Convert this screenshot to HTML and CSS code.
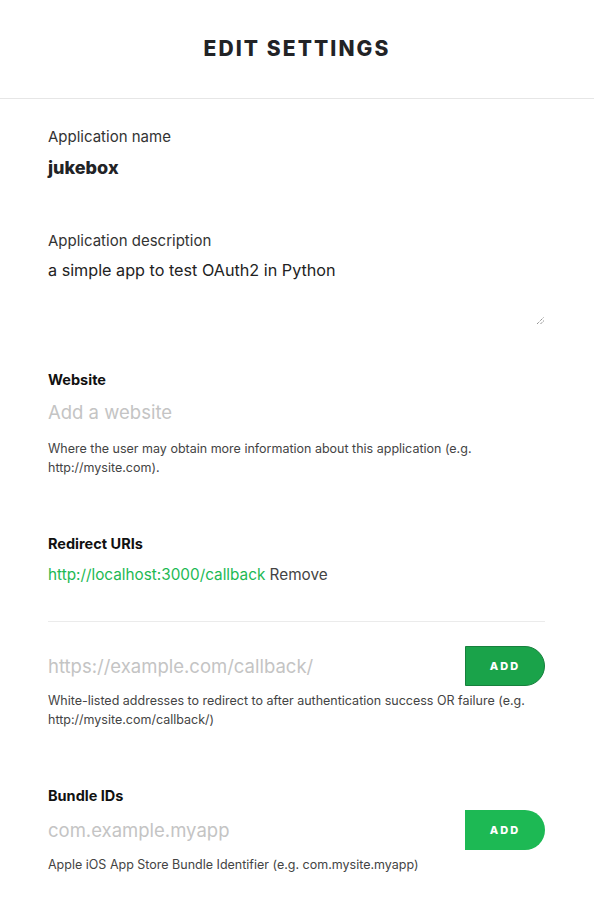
FILE: index.html
```html
<!DOCTYPE html>
<html>
<head>
<meta charset="utf-8">
<link rel="stylesheet" href="styles.css">
</head>
<body>
<header class="header"><h1 class="title">EDIT SETTINGS</h1></header>
<main class="content">
  <section class="field f-name">
    <div class="label">Application name</div>
    <div class="value-bold">jukebox</div>
  </section>
  <section class="field f-desc">
    <div class="label">Application description</div>
    <div class="textarea">
      <div class="value">a simple app to test OAuth2 in Python</div>
      <svg class="grip" width="9" height="9" viewBox="0 0 9 9"><path d="M1 8 L8 1 M4.5 8 L8 4.5" stroke="#666" stroke-width="1" stroke-dasharray="1 1"/></svg>
    </div>
  </section>
  <section class="field f-web">
    <div class="heading">Website</div>
    <div class="placeholder">Add a website</div>
    <p class="help">Where the user may obtain more information about this application (e.g. http://mysite.com).</p>
  </section>
  <section class="field f-redirect">
    <div class="heading">Redirect URIs</div>
    <div class="uri"><span class="link">http://localhost:3000/callback</span> <span class="remove">Remove</span></div>
    <div class="divider"></div>
    <div class="input-row">
      <div class="placeholder">https://example.com/callback/</div>
      <button class="add add-dark">ADD</button>
    </div>
    <p class="help">White-listed addresses to redirect to after authentication success OR failure (e.g. http://mysite.com/callback/)</p>
  </section>
  <section class="field f-bundle">
    <div class="heading">Bundle IDs</div>
    <div class="input-row">
      <div class="placeholder">com.example.myapp</div>
      <button class="add">ADD</button>
    </div>
    <p class="help">Apple iOS App Store Bundle Identifier (e.g. com.mysite.myapp)</p>
  </section>
</main>
</body>
</html>
```
FILE: styles.css
```css
* { box-sizing: border-box; }
body {
  margin: 0;
  background: #fff;
  font-family: "Inter", "Liberation Sans", sans-serif;
  color: #222326;
}
.header {
  height: 99px;
  border-bottom: 1px solid #e6e6e6;
  display: flex;
  align-items: center;
  justify-content: center;
}
.title {
  margin: 0;
  font-size: 21px;
  font-weight: 800;
  letter-spacing: 2.1px;
  color: #222326;
  padding-bottom: 1px;
}
.content {
  padding: 28px 49px 0 48px;
}
.field { display: flex; flex-direction: column; }
.label {
  font-size: 15px;
  color: #333;
  line-height: 20px;
}
.value-bold {
  font-size: 18px;
  font-weight: 800;
  line-height: 24px;
  margin-top: 9px;
  color: #222326;
}
.f-desc { margin-top: 51px; }
.textarea {
  position: relative;
  height: 70px;
  margin-top: 8px;
}
.value { font-size: 16.2px; line-height: 22px; color: #222; }
.grip { position: absolute; right: 0; bottom: 4px; }
.heading {
  font-size: 14.5px;
  font-weight: 700;
  line-height: 20px;
  color: #111;
}
.f-web { margin-top: 41px; }
.placeholder {
  font-size: 18.5px;
  color: #c4c4c4;
  line-height: 26px;
}
.f-web .placeholder { margin-top: 9px; }
.help {
  margin: 0;
  font-size: 12.5px;
  line-height: 19px;
  color: #444;
}
.f-web .help { margin-top: 14px; }
.f-redirect { margin-top: 57px; }
.uri { font-size: 15.3px; line-height: 20px; margin-top: 11px; }
.link { color: #1db954; }
.remove { color: #444; }
.divider { height: 1px; background: #ebebeb; margin-top: 36px; }
.input-row {
  display: flex;
  align-items: center;
  justify-content: space-between;
}
.f-redirect .input-row { margin-top: 24px; }
.add {
  width: 80px;
  height: 40px;
  border: none;
  border-radius: 0 20px 20px 0;
  background: #1db954;
  color: #fff;
  font-family: "Inter", sans-serif;
  font-weight: 800;
  font-size: 11px;
  letter-spacing: 2px;
  padding: 0;
}
.add-dark { background: #1aa34a; border: 1.5px solid #17803d; }
.f-redirect .help { margin-top: 5px; }
.f-bundle { margin-top: 57px; }
.f-bundle .input-row { margin-top: 4px; }
.f-bundle .help { margin-top: 5px; }
```
